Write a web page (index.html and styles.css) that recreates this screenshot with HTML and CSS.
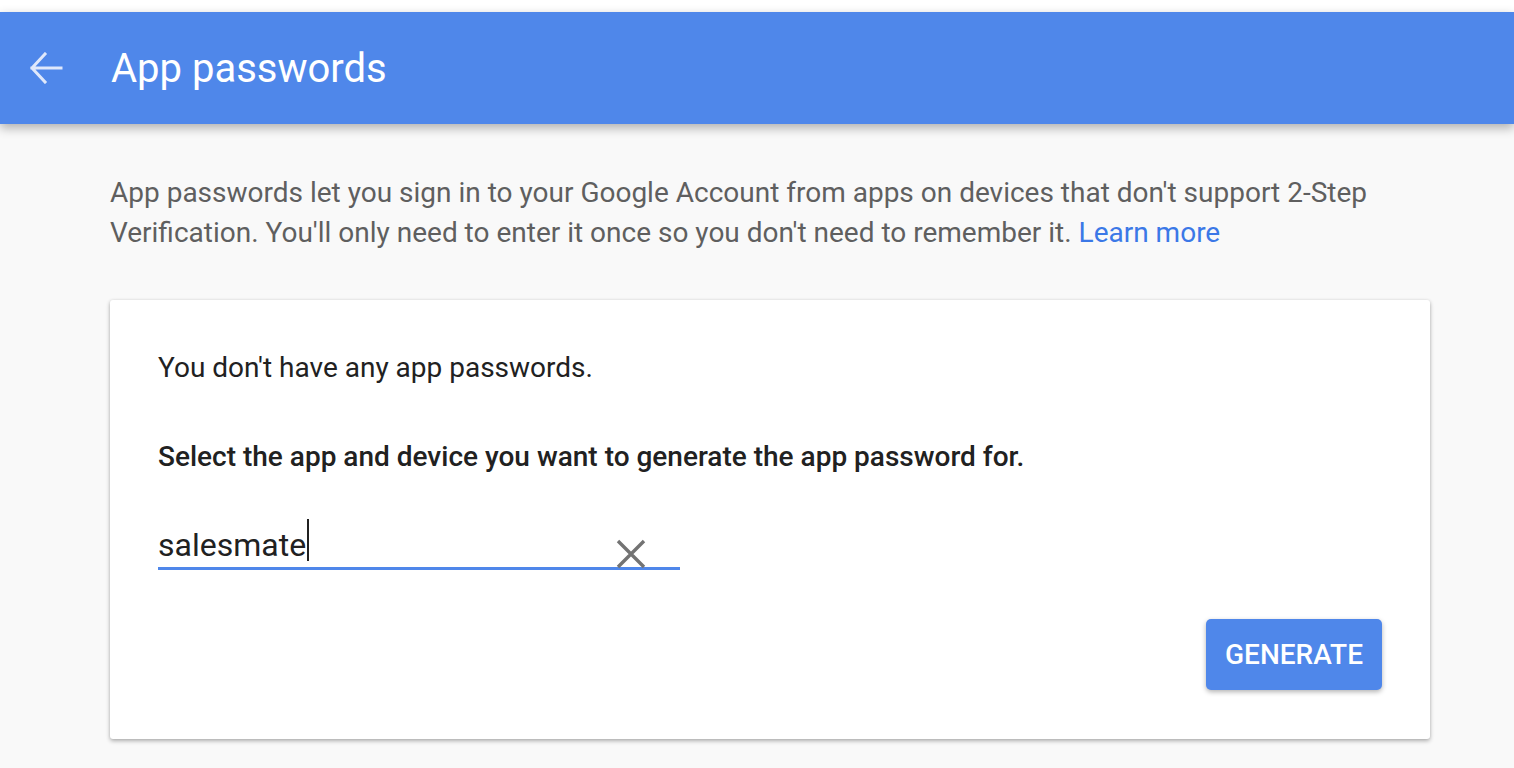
FILE: index.html
```html
<!DOCTYPE html>
<html lang="en">
<head>
<meta charset="utf-8">
<title>App passwords</title>
<link rel="stylesheet" href="styles.css">
</head>
<body>
<div class="topstrip"></div>
<header class="appbar">
  <button class="back" aria-label="Back">
    <svg width="34" height="32" viewBox="0 0 34 32"><path d="M32 16H3M16 2L3 16L16 30" fill="none" stroke="#dfe8fb" stroke-width="3" stroke-linecap="square"/></svg>
  </button>
  <h1 class="title">App passwords</h1>
</header>
<main class="content">
  <p class="intro">App passwords let you sign in to your Google Account from apps on devices that don't support 2-Step Verification. You'll only need to enter it once so you don't need to remember it. <a class="link" href="#">Learn more</a></p>
  <section class="card">
    <p class="empty">You don't have any app passwords.</p>
    <p class="prompt">Select the app and device you want to generate the app password for.</p>
    <div class="field">
      <span class="value">salesmate</span><span class="caret"></span>
      <svg class="clear" width="30" height="30" viewBox="0 0 30 30"><path d="M2 2L28 28M28 2L2 28" stroke="#737373" stroke-width="3.4"/></svg>
    </div>
    <div class="actions">
      <button class="generate">GENERATE</button>
    </div>
  </section>
</main>
</body>
</html>
```
FILE: styles.css
```css
html, body {
  margin: 0;
  padding: 0;
}
body {
  background: #f9f9f9;
  font-family: Roboto, "Liberation Sans", sans-serif;
  height: 768px;
  overflow: hidden;
}
.topstrip {
  height: 12px;
  background: #ffffff;
}
.appbar {
  height: 112px;
  background: #4f87ea;
  display: flex;
  align-items: center;
  box-shadow: 0 4px 10px rgba(0,0,0,0.3);
  position: relative;
  z-index: 1;
}
.back {
  background: none;
  border: 0;
  padding: 0;
  margin-left: 29px;
  width: 34px;
  height: 32px;
  display: flex;
}
.title {
  margin: 0 0 0 48px;
  font-size: 40px;
  font-weight: 400;
  color: #ffffff;
}
.content {
  margin: 0 84px 0 110px;
  padding-top: 49px;
}
.intro {
  margin: 0;
  font-size: 28px;
  line-height: 40px;
  color: #5f5f5f;
}
.link {
  display: inline-block;
  color: #3b78e7;
  text-decoration: none;
}
.card {
  margin-top: 47px;
  background: #ffffff;
  border-radius: 3px;
  box-shadow: 0 2px 4px rgba(0,0,0,0.3), 0 0 3px rgba(0,0,0,0.08);
  padding: 48px 48px 49px 48px;
}
.empty {
  margin: 0;
  font-size: 28px;
  line-height: 40px;
  color: #212121;
}
.prompt {
  margin: 49px 0 0 0;
  font-size: 28px;
  line-height: 40px;
  font-weight: 500;
  color: #212121;
}
.field {
  margin-top: 50px;
  width: 522px;
  height: 40px;
  border-bottom: 3px solid #4f87ea;
  display: flex;
  align-items: flex-start;
}
.value {
  font-size: 32px;
  line-height: 36px;
  color: #212121;
}
.caret {
  width: 2px;
  height: 42px;
  margin-top: -8px;
  margin-left: 1px;
  background: #212121;
}
.clear {
  margin-left: auto;
  margin-right: 34px;
  margin-top: 12px;
}
.actions {
  margin-top: 49px;
  display: flex;
  justify-content: flex-end;
}
.generate {
  height: 71px;
  width: 176px;
  border: 0;
  border-radius: 5px;
  background: #4f87ea;
  color: #ffffff;
  font-family: Roboto, "Liberation Sans", sans-serif;
  font-size: 28px;
  font-weight: 500;
  box-shadow: 0 2px 5px rgba(0,0,0,0.3);
  padding: 0;
}
```
